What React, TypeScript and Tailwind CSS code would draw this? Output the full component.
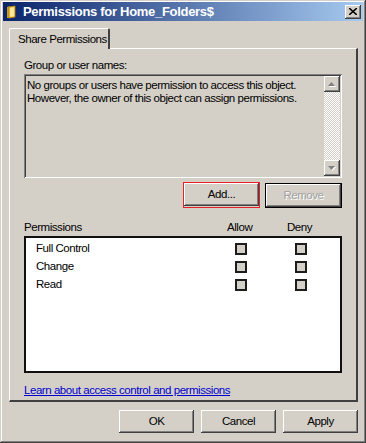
import React from "react";

const raised =
  "shadow-[inset_-1px_-1px_#404040,inset_1px_1px_#ffffff,inset_-2px_-2px_#808080,inset_2px_2px_#d4d0c8]";
const sunken =
  "shadow-[inset_1px_1px_#808080,inset_-1px_-1px_#ffffff,inset_2px_2px_#404040,inset_-2px_-2px_#d4d0c8]";

function Check() {
  return <div className="w-[12px] h-[12px] border-2 border-[#1c1c1c] bg-[#d4d0c8]" />;
}

function Btn({ children, className = "" }: { children: React.ReactNode; className?: string }) {
  return (
    <div
      className={`w-[75px] h-[23px] bg-[#d4d0c8] flex items-center justify-center ${raised} ${className}`}
    >
      {children}
    </div>
  );
}

export default function App() {
  return (
    <div
      className="w-[366px] h-[443px] bg-[#d4d0c8] text-[11.5px] leading-[13px] tracking-[-0.45px] whitespace-nowrap text-black flex flex-col px-[3px] pt-[2px] shadow-[inset_-1px_-1px_#404040,inset_1px_1px_#d4d0c8,inset_-2px_-2px_#808080,inset_2px_2px_#ffffff]"
      style={{ fontFamily: '"Liberation Sans", Arial, sans-serif' }}
    >
      {/* Title bar */}
      <div className="h-[19px] flex items-center bg-[linear-gradient(90deg,#0a246a,#a6caf0)] pl-[3px] pr-[2px]">
        <svg width="11" height="14" viewBox="0 0 11 14" className="mr-[6px]">
          <path d="M1 2 L4 1 L4 13 L1 13 Z" fill="#c99a1e" />
          <path d="M3 2 L9 1 L9 12 L3 13 Z" fill="#f3d15e" stroke="#b8860b" strokeWidth="0.8" />
          <path d="M4 3 L8 2.5 L8 11 L4 11.5 Z" fill="#fbe79a" />
        </svg>
        <span className="text-white font-bold text-[13px] leading-[15px] tracking-[-0.3px]">
          Permissions for Home_Folders$
        </span>
        <div
          className={`ml-auto w-[16px] h-[14px] bg-[#d4d0c8] flex items-center justify-center ${raised}`}
        >
          <svg width="8" height="7" viewBox="0 0 8 7">
            <path d="M0 0 L8 7 M8 0 L0 7" stroke="#000" strokeWidth="1.6" />
          </svg>
        </div>
      </div>

      {/* Tabs */}
      <div className="mt-[7px] pl-[6px] pr-[5px] flex flex-col">
        <div className="flex">
          <div className="h-[21px] w-[101px] flex items-center pl-[8px] border-t border-l border-white border-r-2 border-r-[#404040] rounded-tl-[2px] rounded-tr-[2px] relative z-10 bg-[#d4d0c8] -mb-[1px]">
            Share Permissions
          </div>
        </div>
        <div className="h-[354px] border-t border-l border-white border-r-2 border-b-2 border-r-[#404040] border-b-[#404040] px-[14px] pt-[10px] flex flex-col">
          <div className="h-[13px]">Group or user names:</div>
          <div className={`mt-[2px] h-[104px] bg-[#d4d0c8] flex p-[2px] ${sunken}`}>
            <div className="flex-1 pl-[1px] pt-[3px] leading-[13px]">
              <div>No groups or users have permission to access this object.</div>
              <div>However, the owner of this object can assign permissions.</div>
            </div>
            <div className="w-[16px] flex flex-col">
              <div className={`h-[16px] bg-[#d4d0c8] flex items-center justify-center ${raised}`}>
                <svg width="8" height="5" viewBox="0 0 8 5">
                  <path d="M4.5 1 L8 5 L1 5 Z" fill="#ffffff" />
                  <path d="M3.5 0 L7 4 L0 4 Z" fill="#808080" />
                </svg>
              </div>
              <div className="flex-1 bg-[repeating-conic-gradient(#d4d0c8_0_25%,#ffffff_0_50%)] bg-[length:2px_2px]" />
              <div className={`h-[16px] bg-[#d4d0c8] flex items-center justify-center ${raised}`}>
                <svg width="8" height="5" viewBox="0 0 8 5">
                  <path d="M1 1 L8 1 L4.5 5 Z" fill="#ffffff" />
                  <path d="M0 0 L7 0 L3.5 4 Z" fill="#808080" />
                </svg>
              </div>
            </div>
          </div>

          <div className="mt-[4px] flex justify-end gap-[5px]">
            <div className="border border-[#e8202a]">
              <Btn className="text-black">Add...</Btn>
            </div>
            <div className="mt-[1px] border border-black">
              <Btn className="w-[73px] h-[21px] text-[#a0a0a0] [text-shadow:1px_1px_0_#ffffff]">
                Remove
              </Btn>
            </div>
          </div>

          <div className="mt-[12px] h-[14px] flex leading-[14px]">
            <div className="flex-1">Permissions</div>
            <div className="w-[60px]">Allow</div>
            <div className="w-[55px]">Deny</div>
          </div>

          <div className="mt-[2px] h-[137px] bg-white border-2 border-[#101010] pl-[10px] pt-[4px] flex flex-col gap-[5px] leading-[13px]">
            {["Full Control", "Change", "Read"].map((r) => (
              <div key={r} className="flex items-center h-[13px]">
                <div className="flex-1">{r}</div>
                <div className="w-[60px]">
                  <Check />
                </div>
                <div className="w-[45px]">
                  <Check />
                </div>
              </div>
            ))}
          </div>

          <div className="mt-[11px] text-[#0000cc] underline">
            Learn about access control and permissions
          </div>
        </div>
      </div>

      {/* Bottom buttons */}
      <div className="mt-[8px] pr-[5px] flex justify-end gap-[7px]">
        <Btn className="text-black">OK</Btn>
        <Btn className="text-black">Cancel</Btn>
        <Btn className="text-black">Apply</Btn>
      </div>
    </div>
  );
}
